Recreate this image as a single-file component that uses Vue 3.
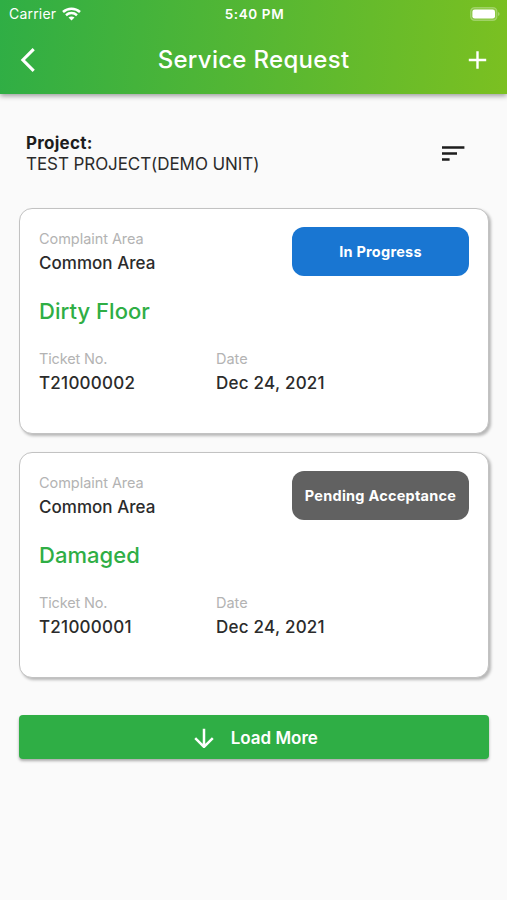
<script setup>
const tickets = [
  { area: 'Common Area', title: 'Dirty Floor', status: 'In Progress', tone: 'progress', number: 'T21000002', date: 'Dec 24, 2021' },
  { area: 'Common Area', title: 'Damaged', status: 'Pending Acceptance', tone: 'pending', number: 'T21000001', date: 'Dec 24, 2021' },
]
</script>

<template>
  <div class="screen">
    <header class="header">
      <div class="status-bar">
        <div class="carrier">
          <span class="carrier-name">Carrier</span>
          <svg class="wifi" width="19" height="14" viewBox="0 0 19 14">
            <path d="M1 5C5.8 .6 13.2 .6 18 5M4 8.2c3.2-2.8 7.8-2.8 11 0" fill="none" stroke="#fff" stroke-width="2.5" />
            <path d="M6.5 10.6c1.7-1.4 4.3-1.4 6 0L9.5 13.6z" fill="#fff" />
          </svg>
        </div>
        <span class="time">5:40 PM</span>
        <svg class="battery" width="30" height="14" viewBox="0 0 30 14">
          <rect x=".6" y=".6" width="26.3" height="12.8" rx="4" fill="#fff" fill-opacity=".15" stroke="#fff" stroke-opacity=".25" stroke-width="1.2" />
          <rect x="2.4" y="2.4" width="22.6" height="9.2" rx="2.4" fill="#fff" />
          <path d="M28.2 5v4q1.3-.6 1.3-2t-1.3-2z" fill="#fff" fill-opacity=".4" />
        </svg>
      </div>
      <div class="nav">
        <svg class="back" width="16" height="24" viewBox="0 0 16 24">
          <path d="M13.7 1.2 2.9 12l10.800 10.800" fill="none" stroke="#fff" stroke-width="3.1" />
        </svg>
        <h1 class="title">Service Request</h1>
        <svg class="add" width="19" height="18" viewBox="0 0 19 18">
          <path d="M9.500 .3v17.400M.8 9h17.400" stroke="#fff" stroke-width="2.4" />
        </svg>
      </div>
    </header>

    <main class="content">
      <section class="project">
        <div>
          <div class="project-label">Project:</div>
          <div class="project-name">TEST PROJECT(DEMO UNIT)</div>
        </div>
        <svg width="23" height="16" viewBox="0 0 23 16">
          <path d="M0 1.5h22.400M0 7.500h15M0 13.500h7.600" stroke="#1d1d1d" stroke-width="2.6" />
        </svg>
      </section>

      <article v-for="ticket in tickets" :key="ticket.number" class="card">
        <div class="card-top">
          <div>
            <div class="label area-label">Complaint Area</div>
            <div class="value area">{{ ticket.area }}</div>
          </div>
          <div class="badge" :class="ticket.tone">{{ ticket.status }}</div>
        </div>
        <h2 class="subject">{{ ticket.title }}</h2>
        <div class="details">
          <div>
            <div class="label number-label">Ticket No.</div>
            <div class="value">{{ ticket.number }}</div>
          </div>
          <div>
            <div class="label">Date</div>
            <div class="value">{{ ticket.date }}</div>
          </div>
        </div>
      </article>

      <button class="load-more">
        <svg width="20" height="20" viewBox="0 0 20 20">
          <path d="M10 .8v18M1.200 10.100l8.800 8.800 8.800-8.800" fill="none" stroke="#fff" stroke-width="2.5" />
        </svg>
        <span>Load More</span>
      </button>
    </main>
  </div>
</template>

<style>
body {
  margin: 0;
  background: #fafafa;
}
</style>

<style scoped>
.screen {
  box-sizing: border-box;
  width: 507px;
  height: 900px;
  overflow: hidden;
  background: #fafafa;
  color: #2b2b2b;
  font-family: Inter, "Liberation Sans", sans-serif;
}
.header {
  height: 94px;
  background: linear-gradient(95deg, #2fae45, #7bc021);
  box-shadow: 0 2px 5px rgba(0, 0, 0, 0.38);
  color: #fff;
}
.status-bar {
  display: grid;
  grid-template-columns: 1fr auto 1fr;
  align-items: center;
  height: 27px;
  padding: 0 7px 0 9px;
}
.carrier {
  display: flex;
  align-items: center;
  gap: 5.5px;
  font-size: 14px;
  line-height: 18px;
  letter-spacing: 0.2px;
}
.time {
  font-size: 13.5px;
  font-weight: 600;
  letter-spacing: 0.6px;
}
.battery {
  justify-self: end;
}
.nav {
  display: grid;
  grid-template-columns: 1fr auto 1fr;
  align-items: center;
  height: 65px;
  padding: 0 20px;
}
.title {
  margin: 0;
  font-size: 24px;
  font-weight: 500;
  line-height: 30px;
  letter-spacing: 0.3px;
}
.add {
  justify-self: end;
}
.content {
  display: flex;
  flex-direction: column;
  padding: 39px 18px 0 19px;
}
.project {
  display: flex;
  justify-content: space-between;
  align-items: center;
  height: 42px;
  margin-bottom: 33px;
  padding: 0 24px 0 7px;
  font-size: 17px;
  line-height: 21px;
}
.project-label {
  color: #1d1d1d;
  font-weight: 700;
  letter-spacing: 0.25px;
}
.project-name {
  letter-spacing: -0.07px;
}
.card {
  box-sizing: border-box;
  height: 225.5px;
  margin-bottom: 18.9px;
  padding: 18px 19px 0;
  border: 1px solid #c2c2c2;
  border-radius: 13px;
  background: #fff;
  box-shadow: 2px 2px 3px rgba(0, 0, 0, 0.27);
}
.card-top {
  display: flex;
  justify-content: space-between;
  height: 49px;
}
.label {
  padding-top: 3px;
  color: #b3b3b3;
  font-size: 14.5px;
  line-height: 18px;
}
.area-label {
  letter-spacing: -0.05px;
}
.number-label {
  letter-spacing: -0.15px;
}
.value {
  margin-top: 4px;
  font-size: 17px;
  font-weight: 500;
  line-height: 22px;
  letter-spacing: 0.25px;
}
.value.area {
  letter-spacing: 0.03px;
}
.badge {
  display: flex;
  justify-content: center;
  align-items: center;
  width: 177px;
  height: 49px;
  border-radius: 12px;
  color: #fff;
  font-size: 14.5px;
  font-weight: 700;
  letter-spacing: 0.24px;
}
.badge.progress {
  background: #1976d2;
}
.badge.pending {
  background: #616161;
}
.subject {
  margin: 21px 0 0;
  color: #2fae45;
  font-size: 22px;
  font-weight: 500;
  line-height: 28px;
  letter-spacing: 0.05px;
}
.details {
  display: grid;
  grid-template-columns: 177px 1fr;
  margin-top: 22px;
}
.load-more {
  display: flex;
  justify-content: center;
  align-items: center;
  gap: 16.5px;
  height: 44px;
  margin-top: 18.7px;
  padding: 1px 2px 0 6px;
  border: 0;
  border-radius: 4px;
  background: #2fae45;
  box-shadow: 0 2px 3px rgba(0, 0, 0, 0.32);
  color: #fff;
  font-family: inherit;
  font-size: 17px;
  font-weight: 600;
}
</style>
